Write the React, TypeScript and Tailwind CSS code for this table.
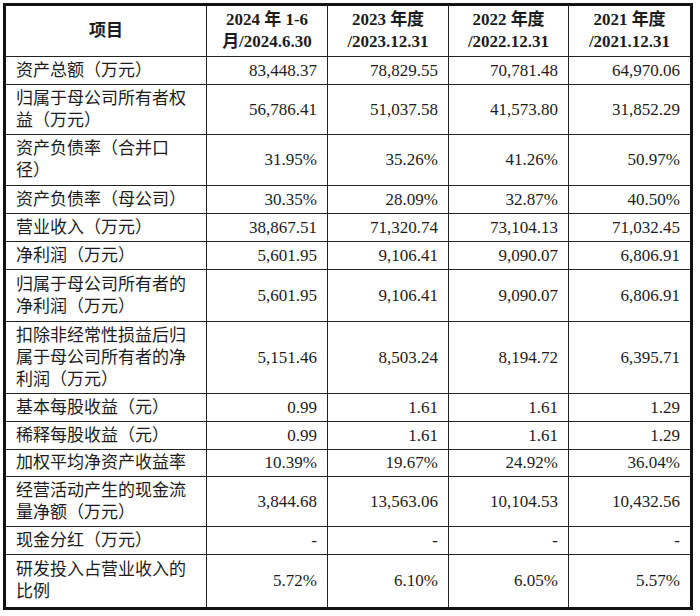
type Row = {
  label: string[];
  values: string[];
  h: string;
};

const rows: Row[] = [
  { label: ["资产总额（万元）"], values: ["83,448.37", "78,829.55", "70,781.48", "64,970.06"], h: "h-[28px]" },
  { label: ["归属于母公司所有者权", "益（万元）"], values: ["56,786.41", "51,037.58", "41,573.80", "31,852.29"], h: "h-[50px]" },
  { label: ["资产负债率（合并口", "径）"], values: ["31.95%", "35.26%", "41.26%", "50.97%"], h: "h-[51px]" },
  { label: ["资产负债率（母公司）"], values: ["30.35%", "28.09%", "32.87%", "40.50%"], h: "h-[28px]" },
  { label: ["营业收入（万元）"], values: ["38,867.51", "71,320.74", "73,104.13", "71,032.45"], h: "h-[28px]" },
  { label: ["净利润（万元）"], values: ["5,601.95", "9,106.41", "9,090.07", "6,806.91"], h: "h-[28px]" },
  { label: ["归属于母公司所有者的", "净利润（万元）"], values: ["5,601.95", "9,106.41", "9,090.07", "6,806.91"], h: "h-[52px]" },
  { label: ["扣除非经常性损益后归", "属于母公司所有者的净", "利润（万元）"], values: ["5,151.46", "8,503.24", "8,194.72", "6,395.71"], h: "h-[72px]" },
  { label: ["基本每股收益（元）"], values: ["0.99", "1.61", "1.61", "1.29"], h: "h-[28px]" },
  { label: ["稀释每股收益（元）"], values: ["0.99", "1.61", "1.61", "1.29"], h: "h-[28px]" },
  { label: ["加权平均净资产收益率"], values: ["10.39%", "19.67%", "24.92%", "36.04%"], h: "h-[27px]" },
  { label: ["经营活动产生的现金流", "量净额（万元）"], values: ["3,844.68", "13,563.06", "10,104.53", "10,432.56"], h: "h-[50px]" },
  { label: ["现金分红（万元）"], values: ["-", "-", "-", "-"], h: "h-[28px]" },
  { label: ["研发投入占营业收入的", "比例"], values: ["5.72%", "6.10%", "6.05%", "5.57%"], h: "h-[54px]" },
];

const headers = [
  ["2024 年 1-6", "月/2024.6.30"],
  ["2023 年度", "/2023.12.31"],
  ["2022 年度", "/2022.12.31"],
  ["2021 年度", "/2021.12.31"],
];

export default function App() {
  return (
    <div
      className="min-h-[616px] w-[700px] bg-white pl-[3px] pt-[3px] text-[17px] leading-[22px] text-[#1c1c1c]"
      style={{ fontFamily: '"Liberation Serif", "Noto Sans CJK SC", serif' }}
    >
      <table className="w-[690px] table-fixed border-collapse border-[3px] border-[#111]">
        <colgroup>
          <col className="w-[202px]" />
          <col className="w-[121px]" />
          <col className="w-[121px]" />
          <col className="w-[120px]" />
          <col className="w-[123px]" />
        </colgroup>
        <thead>
          {/* header row */}
          <tr className="h-[52px]">
            <th className="border border-[#222] text-center align-middle font-bold">项目</th>
            {headers.map((hd) => (
              <th key={hd[1]} className="border border-[#222] text-center align-middle font-bold whitespace-nowrap">
                {hd[0]}
                <br />
                {hd[1]}
              </th>
            ))}
          </tr>
        </thead>
        <tbody>
          {rows.map((r) => (
            <tr key={r.label.join("")} className={r.h}>
              <td className="border border-[#222] pl-[10px] text-left align-middle whitespace-nowrap">
                {r.label.map((l, i) => (
                  <div key={i}>{l}</div>
                ))}
              </td>
              {r.values.map((v, i) => (
                <td key={i} className="border border-[#222] pr-[10px] text-right align-middle whitespace-nowrap">
                  {v}
                </td>
              ))}
            </tr>
          ))}
        </tbody>
      </table>
    </div>
  );
}
